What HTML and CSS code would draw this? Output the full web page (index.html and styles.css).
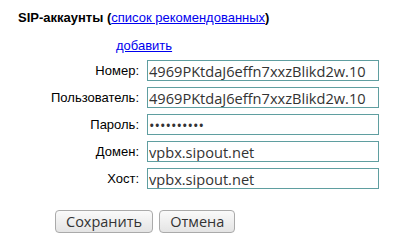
FILE: index.html
```html
<!DOCTYPE html>
<html>
<head>
  <title>SIP-аккаунты</title>
  <link rel="stylesheet" href="styles.css">
</head>
<body>
  <div class="container">
    <div class="title">SIP-аккаунты (<a href="#">список рекомендованных</a>)</div>

    <div class="add-row">
      <a href="#">добавить</a>
    </div>

    <form class="account-form">
      <label for="number">Номер:</label>
      <input type="text" id="number" value="4969PKtdaJ6effn7xxzBlikd2w.10" />

      <label for="user">Пользователь:</label>
      <input type="text" id="user" value="4969PKtdaJ6effn7xxzBlikd2w.10" />

      <label for="pass">Пароль:</label>
      <input type="password" id="pass" value="1234567890" />

      <label for="domain">Домен:</label>
      <input type="text" id="domain" value="vpbx.sipout.net" />

      <label for="host">Хост:</label>
      <input type="text" id="host" value="vpbx.sipout.net" />
    </form>

    <div class="buttons">
      <button type="button">Сохранить</button>
      <button type="button">Отмена</button>
    </div>
  </div>
</body>
</html>
```

FILE: styles.css
```css
body {
  font-family: 'Liberation Sans', Arial, sans-serif;
  font-size: 13px;
  margin: 0;
  background: #fff;
  color: #000;
}
.container {
  padding: 10px 0 0 18px;
}
.title {
  font-weight: bold;
  line-height: 16px;
}
.title a {
  font-weight: normal;
  color: #00e;
}
.add-row {
  padding: 12px 0 0 98px;
  line-height: 16px;
}
.add-row a {
  color: #00e;
}
.account-form {
  display: grid;
  grid-template-columns: 121px 232px;
  column-gap: 8px;
  row-gap: 6px;
  align-items: center;
  margin-top: 6px;
}
label {
  text-align: right;
  color: #000;
}
input {
  box-sizing: border-box;
  height: 21px;
  width: 232px;
  margin: 0;
  padding: 0 1px;
  border: 1px solid #5f9ea0;
  font-family: 'Open Sans', sans-serif;
  font-size: 14.6px;
  color: #333;
}
.buttons {
  display: flex;
  gap: 6px;
  padding: 21px 0 0 37px;
}
button {
  height: 23px;
  padding: 0 10px;
  border: 1px solid #aaa;
  border-radius: 4px;
  background: linear-gradient(#fafafa, #e4e4e4);
  font-family: 'Open Sans', sans-serif;
  font-size: 14.5px;
  color: #333;
}
```
